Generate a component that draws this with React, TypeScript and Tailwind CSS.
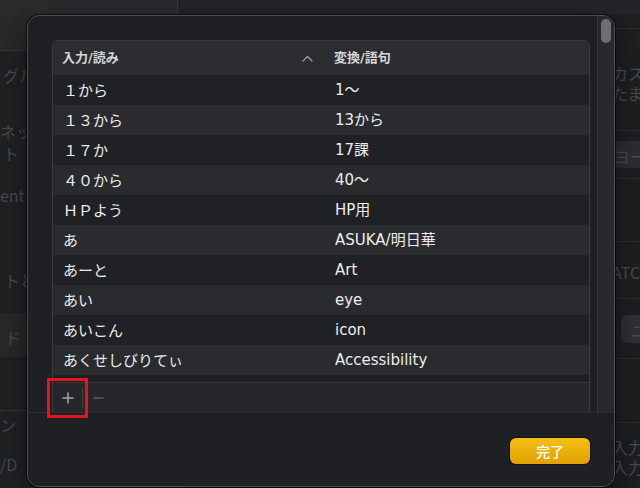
const rows: [string, string][] = [
  ['１から', '1〜'],
  ['１３から', '13から'],
  ['１７か', '17課'],
  ['４０から', '40〜'],
  ['ＨＰよう', 'HP用'],
  ['あ', 'ASUKA/明日華'],
  ['あーと', 'Art'],
  ['あい', 'eye'],
  ['あいこん', 'icon'],
  ['あくせしびりてぃ', 'Accessibility'],
];

const BackgroundWindow = () => (
  <div className="flex flex-col h-full text-[16px] leading-[20px] whitespace-nowrap text-[#4a4b4e] font-['Noto_Sans_CJK_JP',sans-serif]">
    <div className="h-[15px] flex">
      <div className="w-[178px] bg-[#2a2b2d] border-r border-[#38393b]" />
      <div className="flex-1 bg-[#242528]" />
    </div>
    <div className="flex flex-1">
      {/* left sidebar labels */}
      <div className="w-[178px] flex flex-col bg-[#202123] border-r border-[#2e2f31]">
        <div className="h-[36px] bg-[#29292b] border-b border-[#38393b]" />
        <div className="h-[44px] flex items-center pt-[4px] pl-[3px]">グループ</div>
        <div className="h-[88px] flex flex-col justify-center pt-[5px] leading-[22px]">
          <span>ネット</span>
          <span className="pl-[3px]">ト</span>
        </div>
        <div className="h-[20px] flex items-center pt-[4px]">ent</div>
        <div className="h-[60px]" />
        <div className="h-[30px] flex items-center pt-[4px] pl-[4px]">トと</div>
        <div className="h-[20px]" />
        <div className="h-[44px] flex items-center pt-[4px] pl-[5px] bg-[#29292b]">ド</div>
        <div className="h-[54px] border-b border-[#333436]" />
        <div className="h-[24px] flex items-center pt-[4px]">ン</div>
        <div className="h-[15px]" />
        <div className="h-[24px] flex items-center pt-[4px]">/D</div>
      </div>
      {/* right settings pane */}
      <div className="flex-1 flex flex-col bg-[#1e1f21] pl-[434px] overflow-hidden">
        <div className="h-[14px] border-b border-[#2e2f31]" />
        <div className="h-[102px] flex flex-col justify-center pt-[6px] border-b border-[#2e2f31]">
          <span>カスを</span>
          <span>たまま</span>
        </div>
        <div className="h-[48px] flex items-center border-b border-[#2e2f31]">
          <div className="h-[27px] w-full bg-[#2d2e31] flex items-center pt-[3px] pl-[2px]">ヨー</div>
        </div>
        <div className="h-[63px] border-b border-[#2e2f31]" />
        <div className="h-[57px] flex items-center pt-[4px] border-b border-[#2e2f31]">ATC</div>
        <div className="h-[60px] flex items-center pl-[9px] border-b border-[#2e2f31]">
          <div className="h-[28px] w-full rounded-l-md bg-[#303134] flex items-center pt-[3px] pl-[10px]">ニ</div>
        </div>
        <div className="h-[64px] border-b border-[#2e2f31]" />
        <div className="flex flex-col pt-[14px]">
          <span>入力を</span>
          <span>入力</span>
        </div>
      </div>
    </div>
  </div>
);

const SortChevron = () => (
  <svg width="11" height="7" viewBox="0 0 11 7" fill="none">
    <polyline points="1,6 5.5,1.5 10,6" stroke="#9b9c9f" strokeWidth="1.3" strokeLinecap="round" strokeLinejoin="round" />
  </svg>
);

const DictionaryTable = () => (
  <div className="w-[538px] flex flex-col border border-[#3a3b3f] rounded-t-[6px] overflow-hidden">
    <div className="h-[34px] flex items-center bg-[#2c2d31] text-[13px] font-semibold text-[#d6d6d8]">
      <div className="w-[281px] flex items-center justify-between pl-[9px] pr-[21px]">
        <span>入力/読み</span>
        <SortChevron />
      </div>
      <div>変換/語句</div>
    </div>
    {rows.map(([reading, phrase], i) => (
      <div
        key={reading}
        className={`h-[30px] flex items-center pt-[1px] text-[15px] text-[#ececed] ${i % 2 === 0 ? 'bg-[#202125]' : 'bg-[#2a2b2f]'}`}
      >
        <div className="w-[281px] pl-[10px] font-['Noto_Sans_CJK_JP',sans-serif]">{reading}</div>
        <div className="pl-[1px]">{phrase}</div>
      </div>
    ))}
    <div className="h-[7px] bg-[#1f2024]" />
    <div className="h-[30px] flex items-center border-t border-[#35363a] bg-[#25272c] pl-[9px]">
      <svg width="12" height="12" viewBox="0 0 12 12">
        <path d="M6 0.5v11M0.5 6h11" stroke="#a6a7aa" strokeWidth="1.5" />
      </svg>
      <div className="ml-[8px] w-px h-[20px] bg-[#45464a]" />
      <svg className="ml-[10px]" width="11" height="12" viewBox="0 0 11 12">
        <path d="M0.5 6h10" stroke="#5f6064" strokeWidth="1.5" />
      </svg>
    </div>
  </div>
);

export default function App() {
  return (
    <div className="relative w-[640px] h-[488px] overflow-hidden bg-[#1e1f21] font-['DejaVu_Sans','Noto_Sans_CJK_JP',sans-serif]">
      <BackgroundWindow />

      {/* dictionary sheet */}
      <div className="absolute left-[27px] top-[15px] w-[588px] h-[472px] flex flex-col rounded-[12px] border border-[#4d4e52] bg-[#1f2024] overflow-hidden shadow-[0_0_0_1px_rgba(0,0,0,0.6),0_12px_30px_rgba(0,0,0,0.5)]">
        <div className="h-[396px] flex">
          <div className="flex-1 pt-[24px] pl-[24px]">
            <DictionaryTable />
          </div>
          <div className="w-[17px] border-l border-[#38393c] bg-[#28292c] pt-[3px] pl-[3px] pr-[3px]">
            <div className="h-[24px] rounded-full bg-[#6d6e72]" />
          </div>
        </div>
        <div className="flex-1 flex justify-end items-start pt-[25px] pr-[24px] border-t border-[#2b2c30]">
          <button className="w-[80px] h-[26px] rounded-[6px] bg-gradient-to-b from-[#f4c015] to-[#e0a100] text-white text-[14px] font-medium font-['Noto_Sans_CJK_JP',sans-serif] shadow-[0_0_0_1px_rgba(0,0,0,0.45)]">
            完了
          </button>
        </div>
      </div>

      {/* highlight annotation */}
      <div className="absolute left-[47px] top-[378px] w-[41px] h-[40px] border-[3px] border-[#e3141c]" />
    </div>
  );
}
